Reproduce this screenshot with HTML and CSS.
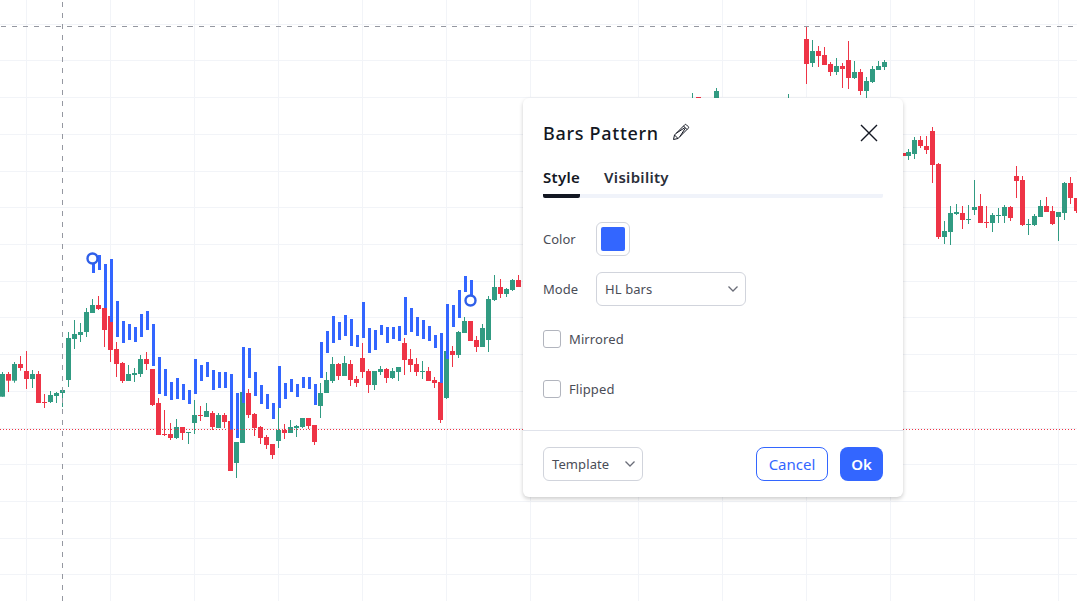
FILE: index.html
```html
<!DOCTYPE html>
<html lang="en">
<head>
    <meta charset="UTF-8">
    <meta name="viewport" content="width=device-width, initial-scale=1.0">
    <title>Bars Pattern</title>
    <link rel="stylesheet" href="styles.css">
</head>
<body>
    <!-- Chart is drawn by chart.js -->
    <svg id="chart" class="chart" width="1077" height="601" viewBox="0 0 1077 601"></svg>

    <div class="dialog">
        <div class="dialog-header">
            <div class="dialog-title">
                <h2>Bars Pattern</h2>
                <svg class="pencil" width="18" height="18" viewBox="0 0 18 18">
                    <path d="M1.5 16.5l1-4.5L12.7 1.8a1.2 1.2 0 0 1 1.7 0l1.8 1.8a1.2 1.2 0 0 1 0 1.7L6 15.5z M2.5 12l3.5 3.5 M11.5 3l3.5 3.5 M4.3 10.2L12.8 4.7 M7.8 13.7L13.3 5.2"/>
                </svg>
            </div>
            <svg class="close" width="18" height="18" viewBox="0 0 18 18">
                <path d="M1 1l16 16 M17 1L1 17"/>
            </svg>
        </div>

        <div class="tabs">
            <a class="tab active">Style</a>
            <a class="tab">Visibility</a>
        </div>

        <div class="dialog-body">
            <div class="field">
                <label>Color</label>
                <span class="swatch"><span class="swatch-fill"></span></span>
            </div>
            <div class="field">
                <label>Mode</label>
                <div class="select select-mode">
                    <span>HL bars</span>
                    <svg class="chevron" width="12" height="8" viewBox="0 0 12 8"><path d="M1.5 1.5L6 6l4.5-4.5"/></svg>
                </div>
            </div>
            <div class="check"><span class="box"></span><span>Mirrored</span></div>
            <div class="check"><span class="box"></span><span>Flipped</span></div>
        </div>

        <div class="dialog-footer">
            <div class="select select-template">
                <span>Template</span>
                <svg class="chevron" width="12" height="8" viewBox="0 0 12 8"><path d="M1.5 1.5L6 6l4.5-4.5"/></svg>
            </div>
            <div class="buttons">
                <button class="btn btn-cancel">Cancel</button>
                <button class="btn btn-ok">Ok</button>
            </div>
        </div>
    </div>

    <script src="chart.js"></script>
</body>
</html>
```

FILE: styles.css
```css
:root {
    --blue: #3366ff;
    --text-color: #131722;
    --label-color: #4a4d57;
    --border-color: #d1d4dc;
}
body {
    margin: 0;
    width: 1077px;
    height: 601px;
    overflow: hidden;
    background-color: #ffffff;
    font-family: "Noto Sans", "Open Sans", sans-serif;
    color: var(--text-color);
}
.chart {
    position: absolute;
    top: 0;
    left: 0;
    display: block;
}
.grid-line { fill: #f2f4f8; }
.candle-up { fill: #319b82; }
.candle-down { fill: #ee3446; }
.hl-bar { fill: #3366ff; }
.anchor {
    fill: #ffffff;
    stroke: #2f5fe8;
    stroke-width: 2.4;
}
.crosshair {
    stroke: #9598a1;
    stroke-width: 1;
    stroke-dasharray: 5 6;
}
.crosshair-v { stroke-dashoffset: -2; }
.crosshair-h { stroke-dashoffset: -1; }
.price-line {
    stroke: #ee3446;
    stroke-width: 1;
    stroke-dasharray: 1 2;
}
.dialog {
    position: absolute;
    left: 523px;
    top: 98px;
    width: 380px;
    height: 399px;
    display: flex;
    flex-direction: column;
    box-sizing: border-box;
    background-color: #ffffff;
    border-radius: 6px;
    box-shadow: 0 2px 4px rgba(0,0,0,0.2);
}
.dialog-header {
    display: flex;
    justify-content: space-between;
    align-items: center;
    padding: 26px 25px 0 20px;
    height: 18px;
}
.dialog-title {
    display: flex;
    align-items: center;
    gap: 13px;
}
.dialog-title h2 {
    margin: 0;
    font-size: 18px;
    font-weight: 500;
    letter-spacing: 0.7px;
}
.pencil {
    margin-bottom: 3px;
}
.pencil path, .close path {
    fill: none;
    stroke: #131722;
    stroke-width: 1;
}
.close path { stroke-width: 1.4; }
.tabs {
    display: flex;
    gap: 24px;
    margin: 25px 20px 0;
    height: 27px;
    border-bottom: 4px solid #f0f3fa;
    border-radius: 2px;
}
.tab {
    font-size: 15px;
    font-weight: 600;
    line-height: 20px;
    letter-spacing: 0.3px;
    color: #2a2e39;
}
.tab.active {
    color: var(--text-color);
    height: 31px;
    box-sizing: border-box;
    border-bottom: 4px solid var(--text-color);
    border-radius: 0 0 2px 2px;
}
.dialog-body {
    flex: 1;
    padding: 24px 20px 0;
}
.field {
    display: flex;
    align-items: center;
    height: 34px;
    margin-bottom: 16px;
    font-size: 13px;
    color: var(--label-color);
}
.field label { width: 53px; }
.swatch {
    display: flex;
    align-items: center;
    justify-content: center;
    width: 34px;
    height: 34px;
    box-sizing: border-box;
    border: 1px solid var(--border-color);
    border-radius: 6px;
}
.swatch-fill {
    width: 24px;
    height: 24px;
    border-radius: 2px;
    background-color: var(--blue);
}
.select {
    display: flex;
    align-items: center;
    justify-content: space-between;
    height: 34px;
    box-sizing: border-box;
    padding: 0 6px 0 8px;
    border: 1px solid var(--border-color);
    border-radius: 6px;
    font-size: 13px;
    letter-spacing: 0.1px;
    color: var(--label-color);
}
.select-mode { width: 150px; }
.select-template { width: 100px; }
.chevron path {
    fill: none;
    stroke: #6a6d78;
    stroke-width: 1.3;
}
.check {
    display: flex;
    align-items: center;
    gap: 8px;
    height: 18px;
    margin-bottom: 32px;
    font-size: 13px;
    letter-spacing: 0.1px;
    color: var(--label-color);
}
.field + .check {
    margin-top: 24px;
}
.box {
    width: 18px;
    height: 18px;
    box-sizing: border-box;
    border: 1px solid #b2b5be;
    border-radius: 3px;
}
.dialog-footer {
    display: flex;
    justify-content: space-between;
    align-items: center;
    padding: 16px 20px;
    border-top: 1px solid #e0e3eb;
}
.buttons {
    display: flex;
    gap: 12px;
}
.btn {
    height: 34px;
    box-sizing: border-box;
    border-radius: 8px;
    font-family: inherit;
    font-size: 15px;
    padding: 0;
}
.btn-cancel {
    width: 72px;
    background-color: #ffffff;
    border: 1px solid var(--blue);
    color: var(--blue);
}
.btn-ok {
    width: 43px;
    background-color: var(--blue);
    border: none;
    color: #ffffff;
    font-weight: 600;
}
```

FILE: chart.js
```js
const svgNS = 'http://www.w3.org/2000/svg';
const chart = document.getElementById('chart');

function add(tag, cls, attrs) {
    const el = document.createElementNS(svgNS, tag);
    el.setAttribute('class', cls);
    for (const key in attrs) el.setAttribute(key, attrs[key]);
    chart.appendChild(el);
}

// grid
const gridX = [26, 110, 194, 278, 362, 446, 530, 638, 722, 806, 890, 974, 1058];
const gridY = [24, 60, 97, 134, 171, 207, 244, 281, 317, 354, 391, 428, 464, 501, 538, 574];
gridX.forEach(x => add('rect', 'grid-line', { x, y: 0, width: 1, height: 601 }));
gridY.forEach(y => add('rect', 'grid-line', { x: 0, y, width: 1077, height: 1 }));

// candles: [x, high, low, top, bottom, up]
const candles = [
    [2,372,396.7,374,396.7,1],[8,372,392,374,380.7,0],[14,362,382.7,364,380.7,1],[20,356,370.7,364,368,0],
    [26,351,389,371,379,0],[32,370,388,374,379,1],[38,371,403,374,403,0],[44,394,408,402,403,0],
    [50,391,403,395,402,1],[56,392,403,393,396,1],[62,389,407,390,393,1],[68,332,387,338,380,1],
    [74,320,349,334,339,1],[80,323,342,332,335,1],[86,308,337,312,332,1],[92,299,313,305,313,1],
    [98,296,310,305,309,0],[104,308,347,308,330,0],[110,316,362,316,350,0],[116,342,377,349,364,0],
    [122,362,383,363,381,0],[128,365,381,374,381,1],[134,368,382,373,375,1],[140,355,377,359,374,1],
    [146,352,370,359,364,0],[152,369,406,369,405,0],[158,398,435,403,435,0],[164,410,436,434,435,0],
    [170,423,440,434,438,0],[176,419,439,427,438,1],[182,427,440,427,433,0],[188,432,444,432,433,1],
    [194,400,434,415,423,1],[200,406,421,415,416,0],[206,403,417,411,417,1],[212,411,430,413,427,0],
    [218,413,428,415,428,1],[224,413,428,415,422,0],[230,421,471,421,471,0],[236,442,478,442,463,1],
    [242,392,443,392,443,1],[248,389,418,393,415,0],[254,413,436,414,428,0],[260,426,444,427,438,0],
    [266,435,449,437,445,0],[272,444,459,444,455,0],[278,408,448,430,441,1],[284,424,439,430,433,0],
    [290,420,433,427,433,1],[296,425,437,426,428,1],[302,418,428,418,427,1],[308,418,429,418,426,0],
    [314,425,445,425,442,0],[320,383,418,393,406,1],[326,372,393,380,393,1],[332,357,383,364,381,1],
    [338,363,380,364,376,0],[344,356,376,363,376,1],[350,360,386,364,380,0],[356,376,387,379,383,0],
    [362,343,378,358,372,0],[368,369,393,371,385,0],[374,371,390,371,385,1],[380,366,375,369,372,1],
    [386,368,383,369,378,0],[392,368,379,371,378,1],[398,367,381,367,372,1],[404,338,375,343,360,0],
    [410,349,372,359,365,0],[416,358,376,364,372,0],[422,361,379,371,372,1],[428,367,381,371,381,0],
    [434,377,388,380,383,0],[440,382,423,382,420,0],[446,351,399,351,398,1],[452,346,367,351,355,0],
    [458,331,358,332,355,1],[464,317,333,321,333,1],[470,321,341,321,341,0],[476,336,352,340,347,0],
    [482,324,347,328,347,1],[488,296,352,299,340,1],[494,275,301,287,300,1],[500,279,298,287,294,0],
    [506,288,297,289,294,1],[512,279,291,280,290,1],[518,275,287,280,287,0],
    [692,93,98,98,98,1],[698,97,98,97,98,0],[716,88,98,91,98,1],[788,94,98,98,98,1],
    [806,27,84,39,64,0],[812,40,67,51,63,1],[818,46,67,51,56,0],[824,47,65,55,65,0],
    [830,62,76,64,72,0],[836,58,75,66,72,1],[842,63,88,66,69,0],[848,41,89,60,78,0],
    [854,61,79,72,78,1],[860,69,95,72,91,0],[866,77,98,81,91,1],[872,66,83,69,82,1],
    [878,61,70,66,70,1],[884,60,70,62,67,1],
    [904,153,156,153,156,0],[908,149,160,152,156,1],[914,137,159,140,154,1],[920,136,148,140,146,0],
    [926,136,154,146,150,0],[932,127,183,131,165,0],[938,163,239,164,237,0],[944,221,244,231,237,1],
    [950,206,245,213,232,1],[956,204,215,212,214,1],[962,206,229,213,220,0],[968,205,224,219,220,1],
    [974,180,215,207,210,1],[980,194,223,206,223,0],[986,206,228,222,223,0],[992,213,232,215,223,1],
    [998,208,223,215,216,1],[1004,205,223,207,216,1],[1010,206,221,207,218,0],[1016,166,198,176,181,0],
    [1022,176,226,180,225,0],[1028,219,235,224,225,1],[1034,214,226,216,225,1],[1040,200,217,206,217,1],
    [1046,197,212,206,212,0],[1052,206,225,211,224,0],[1058,212,241,212,217,1],[1064,182,220,183,213,1],
    [1070,177,204,183,198,0],[1076,198,213,198,211,0]
];
candles.forEach(([x, high, low, top, bottom, up]) => {
    const cls = up ? 'candle-up' : 'candle-down';
    add('rect', cls, { x, y: high, width: 1, height: low - high });
    add('rect', cls, { x: x - 2, y: top, width: 5, height: Math.max(bottom - top, 1) });
});

// pattern bars: [high, low], one every 6px from x=92
const bars = [
    [258,273],[255,270],[264,308],[259,322],[301,337],[321,343],[324,340],[327,342],[314,337],[311,330],
    [324,366],[357,394],[369,396],[382,400],[378,399],[384,400],[390,404],[359,394],[365,381],
    [362,377],[370,390],[372,388],[372,388],[374,430],[393,438],[347,403],[348,378],[372,396],[385,404],
    [394,409],[403,419],[366,408],[383,399],[379,392],[384,397],[377,388],[377,389],[384,405],[342,378],
    [331,353],[316,343],[322,340],[315,336],[319,346],[335,347],[302,338],[328,353],[330,350],[325,335],
    [327,343],[327,339],[326,341],[297,335],[308,332],[317,336],[320,339],[326,341],[335,348],[333,383],
    [304,359],[305,327],[290,318],[276,292],[280,295]
];
bars.forEach(([high, low], i) => {
    add('rect', 'hl-bar', { x: 92 + i * 6, y: high, width: 3, height: low - high });
});

add('circle', 'anchor', { cx: 92.5, cy: 258.5, r: 5 });
add('circle', 'anchor', { cx: 470.5, cy: 300.5, r: 5 });

// crosshair and last price line
add('line', 'price-line', { x1: 0, y1: 429.5, x2: 1077, y2: 429.5 });
add('line', 'crosshair crosshair-v', { x1: 62.5, y1: 0, x2: 62.5, y2: 601 });
add('line', 'crosshair crosshair-h', { x1: 0, y1: 26.5, x2: 1077, y2: 26.5 });
```
